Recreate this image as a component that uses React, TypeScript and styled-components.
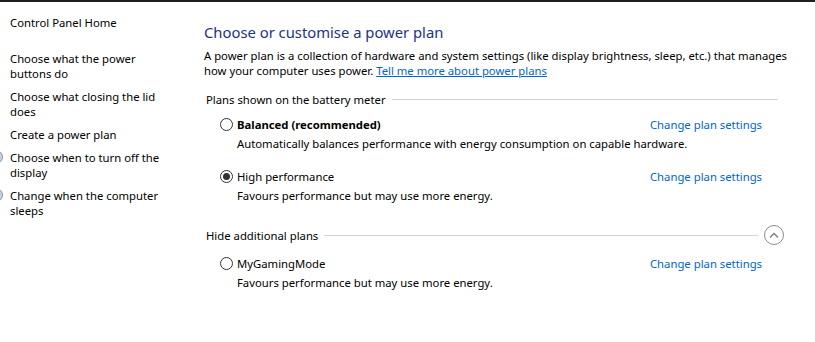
import styled, { createGlobalStyle } from 'styled-components';

const GlobalStyle = createGlobalStyle`
    html, body {
        margin: 0;
        padding: 0;
        background: #ffffff;
    }
    body {
        font-family: "Noto Sans", "Open Sans", sans-serif;
        font-size: 11.3px;
        color: #000000;
    }
`;

const Window = styled.div`
    width: 815px;
    height: 342px;
    box-sizing: border-box;
    border-top: 2px solid #1f1f1f;
    display: flex;
    overflow: hidden;
    background: #ffffff;
`;

const Sidebar = styled.nav`
    width: 194px;
    flex-shrink: 0;
    box-sizing: border-box;
    padding: 13px 0 0 10px;
    display: flex;
    flex-direction: column;
    gap: 8px;
`;

const NavLink = styled.a<{ $home?: boolean }>`
    display: flex;
    align-items: flex-start;
    max-width: 162px;
    line-height: 15px;
    color: #000000;
    text-decoration: none;
    cursor: pointer;
    margin-bottom: ${p => (p.$home ? '13px' : '0')};
    &:hover {
        color: #0066cc;
        text-decoration: underline;
    }
`;

const NavIcon = styled.svg`
    width: 16px;
    height: 16px;
    flex-shrink: 0;
    margin: -1px 6px 0 -22px;
`;

const Main = styled.main`
    flex: 1;
    padding: 20px 37px 0 10px;
    display: flex;
    flex-direction: column;
`;

const Title = styled.h1`
    margin: 0;
    font-size: 14.8px;
    font-weight: 400;
    line-height: 20px;
    color: #1e3287;
`;

const Intro = styled.p`
    margin: 6px -20px 0 0;
    line-height: 15px;
`;

const Link = styled.a`
    color: #0066cc;
    text-decoration: underline;
    cursor: pointer;
`;

const SectionHeader = styled.div<{ $gap: number }>`
    display: flex;
    align-items: center;
    gap: 6px;
    margin-top: ${p => p.$gap}px;
    padding-left: 2px;
    line-height: 15px;
    min-height: 20px;
    &::after {
        content: '';
        flex: 1;
        height: 1px;
        background: #d5d5d5;
        order: 1;
    }
`;

const CollapseButton = styled.button`
    order: 2;
    width: 20px;
    height: 20px;
    padding: 0;
    margin-right: -6px;
    border: 1px solid #8c8c8c;
    border-radius: 50%;
    background: #ffffff;
    display: flex;
    align-items: center;
    justify-content: center;
    cursor: pointer;
`;

const PlanList = styled.div<{ $top: number }>`
    display: flex;
    flex-direction: column;
    gap: 18px;
    margin-top: ${p => p.$top}px;
    padding-left: 16px;
`;

const Plan = styled.div`
    display: flex;
    flex-direction: column;
    gap: 4px;
`;

const PlanRow = styled.div`
    display: flex;
    align-items: center;
    justify-content: space-between;
    line-height: 15px;
`;

const RadioLabel = styled.label<{ $bold?: boolean }>`
    display: flex;
    align-items: center;
    gap: 4px;
    font-weight: ${p => (p.$bold ? 700 : 400)};
    cursor: pointer;
`;

const Radio = styled.span<{ $checked?: boolean }>`
    width: 13px;
    height: 13px;
    box-sizing: border-box;
    border: 1px solid #333333;
    border-radius: 50%;
    display: flex;
    align-items: center;
    justify-content: center;
    &::after {
        content: '';
        width: 7px;
        height: 7px;
        border-radius: 50%;
        background: #333333;
        display: ${p => (p.$checked ? 'block' : 'none')};
    }
`;

const SettingsLink = styled.a`
    color: #0066cc;
    cursor: pointer;
    margin-right: 16px;
    &:hover {
        text-decoration: underline;
    }
`;

const PlanDescription = styled.div`
    padding-left: 17px;
    line-height: 15px;
`;

type PlanItem = {
    name: string,
    description: string,
    bold?: boolean,
    checked?: boolean,
};

const batteryPlans: PlanItem[] = [
    {
        name: 'Balanced (recommended)',
        description: 'Automatically balances performance with energy consumption on capable hardware.',
        bold: true,
    },
    {
        name: 'High performance',
        description: 'Favours performance but may use more energy.',
        checked: true,
    },
];

const additionalPlans: PlanItem[] = [
    {
        name: 'MyGamingMode',
        description: 'Favours performance but may use more energy.',
    },
];

const PowerIcon = () => <NavIcon viewBox="0 0 16 16">
    <circle cx="8" cy="8" r="6.5" fill="#c9d2dc" stroke="#8a96a3" />
</NavIcon>;

const PlanGroup = ({ plans, top }: { plans: PlanItem[], top: number }) => <PlanList $top={top}>
    {plans.map(({ name, description, bold, checked }) => <Plan key={name}>
        <PlanRow>
            <RadioLabel $bold={bold}>
                <Radio $checked={checked} />
                {name}
            </RadioLabel>
            <SettingsLink>Change plan settings</SettingsLink>
        </PlanRow>
        <PlanDescription>{description}</PlanDescription>
    </Plan>)}
</PlanList>;

export default function App() {
    return <>
        <GlobalStyle />
        <Window>
            <Sidebar>
                <NavLink $home>Control Panel Home</NavLink>
                <NavLink>Choose what the power buttons do</NavLink>
                <NavLink>Choose what closing the lid does</NavLink>
                <NavLink>Create a power plan</NavLink>
                <NavLink><PowerIcon /><span>Choose when to turn off the display</span></NavLink>
                <NavLink><PowerIcon /><span>Change when the computer sleeps</span></NavLink>
            </Sidebar>
            <Main>
                <Title>Choose or customise a power plan</Title>
                <Intro>
                    A power plan is a collection of hardware and system settings (like display brightness, sleep, etc.) that manages
                    how your computer uses power. <Link>Tell me more about power plans</Link>
                </Intro>
                <SectionHeader $gap={11}>Plans shown on the battery meter</SectionHeader>
                <PlanGroup plans={batteryPlans} top={8} />
                <SectionHeader $gap={22}>
                    Hide additional plans
                    <CollapseButton aria-label="Hide additional plans">
                        <svg width="10" height="6" viewBox="0 0 10 6">
                            <path d="M1 5.5 L5 1.5 L9 5.5" fill="none" stroke="#7a7a7a" strokeWidth="1.3" />
                        </svg>
                    </CollapseButton>
                </SectionHeader>
                <PlanGroup plans={additionalPlans} top={11} />
            </Main>
        </Window>
    </>;
}
